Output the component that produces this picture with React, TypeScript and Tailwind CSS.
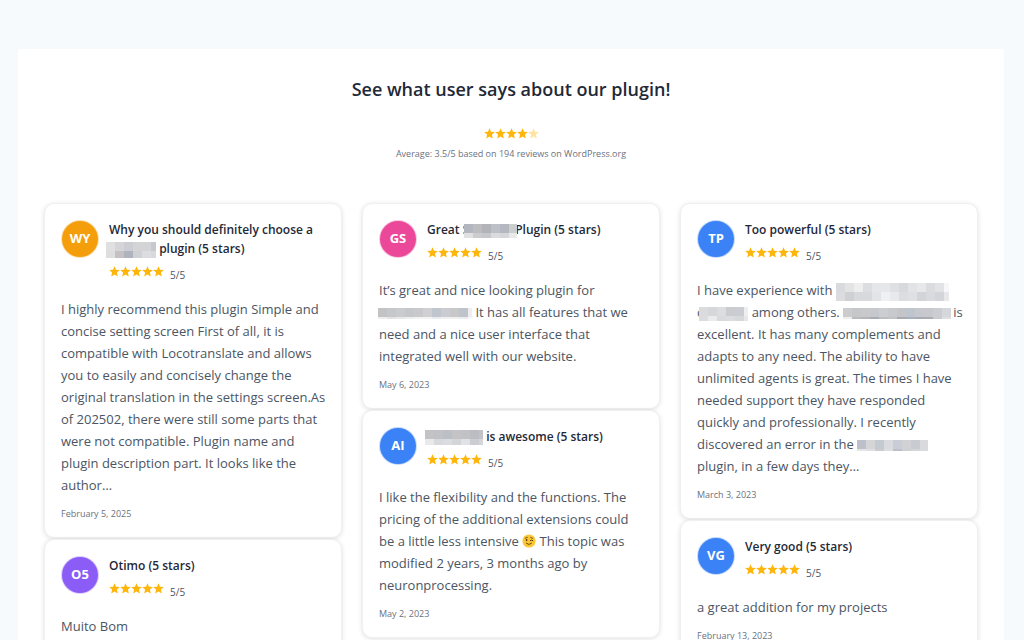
import type { ReactNode } from "react";

const STAR = "M5.5 0.2 7 3.8 10.9 4.1 7.9 6.6 8.8 10.4 5.5 8.4 2.2 10.4 3.1 6.6 0.1 4.1 4 3.8Z";

function Stars({ filled = 5 }: { filled?: number }) {
  return (
    <span className="flex" role="img" aria-label={`${filled} of 5 stars`}>
      {[1, 2, 3, 4, 5].map((n) => (
        <svg
          key={n}
          viewBox="0 0 11 11"
          className={n <= filled ? "size-[11px] fill-[#ffb60a]" : "size-[11px] fill-[#ffe3a1]"}
        >
          <path d={STAR} />
        </svg>
      ))}
    </span>
  );
}

// pixelated block over a redacted name, cells are 9px wide
function Mosaic({ width, rows, className }: { width: number; rows: [number, string[]][]; className?: string }) {
  const height = rows.reduce((sum, [h]) => sum + h, 0);
  let y = 0;
  return (
    <svg
      width={width}
      height={height}
      shapeRendering="crispEdges"
      className={`relative inline-block align-middle ${className ?? ""}`}
      aria-hidden="true"
    >
      {rows.map(([h, cells], r) => {
        const top = y;
        y += h;
        return cells.map((fill, i) => <rect key={`${r}-${i}`} x={i * 9} y={top} width={9} height={h} fill={fill} />);
      })}
    </svg>
  );
}

function Wink() {
  return (
    <svg viewBox="0 0 14 14" className="inline-block size-[14px] align-[-2px]" role="img" aria-label="wink">
      <circle cx="7" cy="7" r="6.6" fill="#fcc736" />
      <path d="M3.2 4.2 5.4 3.4M8.6 3.4 10.8 4.4" stroke="#6b4a12" strokeWidth="0.9" strokeLinecap="round" />
      <ellipse cx="4.6" cy="6.1" rx="0.9" ry="1.1" fill="#5b3c0c" />
      <path d="M8.3 6.5Q9.5 5.5 10.8 6.5" fill="none" stroke="#5b3c0c" strokeWidth="1" strokeLinecap="round" />
      <path d="M4.4 9.4Q7 11.8 9.6 9.3" fill="none" stroke="#6b4a12" strokeWidth="1" strokeLinecap="round" />
    </svg>
  );
}

type Review = {
  initials: string;
  color: string;
  title: ReactNode;
  body: ReactNode;
  date: string;
};

const columns: Review[][] = [
  [
    {
      initials: "WY",
      color: "bg-[#f59e0b]",
      title: (
        <>
          Why you should definitely choose a<br />
          <Mosaic
            width={50}
            className="-ml-[3px]"
            rows={[
              [9, ["#e0e0e1", "#d5d4d6", "#cbcdd3", "#d4d4d7", "#d3d4d6", "#c5c8cf"]],
              [7, ["#dedede", "#c5c0c3", "#aeb3bd", "#cfd1d5", "#dcdde1", "#d8d9dd"]],
            ]}
          />{" "}
          plugin (5 stars)
        </>
      ),
      body: (
        <>
          I highly recommend this plugin Simple and
          <br />
          concise setting screen First of all, it is
          <br />
          compatible with Locotranslate and allows
          <br />
          you to easily and concisely change the
          <br />
          original translation in the settings screen.As
          <br />
          of 202502, there were still some parts that
          <br />
          were not compatible. Plugin name and
          <br />
          plugin description part. It looks like the
          <br />
          author…
        </>
      ),
      date: "February 5, 2025",
    },
    { initials: "O5", color: "bg-[#8b5cf6]", title: "Otimo (5 stars)", body: "Muito Bom", date: "" },
  ],
  [
    {
      initials: "GS",
      color: "bg-[#ec4899]",
      title: (
        <>
          Great S
          <Mosaic
            width={53}
            className="-ml-[5px]"
            rows={[
              [9, ["#b3b6bf", "#bcbdc0", "#b1b3b8", "#bbc0c9", "#b4b8c1", "#cccdce"]],
              [5, ["#e0e0e1", "#cccccf", "#c7c8cd", "#d9dbdf", "#d5d6da", "#e9e9e9"]],
            ]}
          />
          <span className="-ml-[2px]">Plugin (5 stars)</span>
        </>
      ),
      body: (
        <>
          It’s great and nice looking plugin for
          <br />
          <Mosaic
            width={94}
            className="-ml-px"
            rows={[
              [9, ["#c2c3c5", "#c6c7ca", "#cacbce", "#c5c7cb", "#c9c9cb", "#d0d0d3", "#c0c6ce", "#cbccd1", "#c8c8cb", "#bfc3cb", "#eeeef0"]],
              [2, ["#eeeeee", "#e3e3e5", "#e8e8e9", "#eeeeef", "#f3f3f3", "#f3f3f4", "#eaebed", "#f0f0f1", "#f0f0f0", "#ededef", "#f7f7f7"]],
            ]}
          />{" "}
          It has all features that we
          <br />
          need and a nice user interface that
          <br />
          integrated well with our website.
        </>
      ),
      date: "May 6, 2023",
    },
    {
      initials: "AI",
      color: "bg-[#3b82f6]",
      title: (
        <>
          <Mosaic
            width={58}
            className="-ml-[2px]"
            rows={[
              [9, ["#c3c3c6", "#c1c2c5", "#bdbfc6", "#c4c4c7", "#c1c2c6", "#bbbdc3", "#c2c3c6"]],
              [6, ["#e9e9ea", "#d7d9dd", "#d9dde1", "#d4d5d9", "#e0e2e5", "#cccdd2", "#d5d6da"]],
            ]}
          />{" "}
          is awesome (5 stars)
        </>
      ),
      body: (
        <>
          I like the flexibility and the functions. The
          <br />
          pricing of the additional extensions could
          <br />
          be a little less intensive <Wink /> This topic was
          <br />
          modified 2 years, 3 months ago by
          <br />
          neuronprocessing.
        </>
      ),
      date: "May 2, 2023",
    },
  ],
  [
    {
      initials: "TP",
      color: "bg-[#3b82f6]",
      title: "Too powerful (5 stars)",
      body: (
        <>
          I have experience with{" "}
          <Mosaic
            width={113}
            rows={[
              [9, ["#d9dade", "#e2e3e5", "#eeeeef", "#dcdde1", "#e5e6e8", "#e6e7e9", "#dfe0e3", "#d8d9dd", "#e2e3e5", "#e8e8ea", "#dadce0", "#e3e3e5", "#f6f7f8"]],
              [9, ["#dcdce0", "#cfd0d2", "#d8d9dd", "#d8d9dc", "#e3e4e7", "#eef0f3", "#e8e9ed", "#dddde0", "#dfe0e3", "#d3d4d8", "#d9dadd", "#d3d5da", "#e8e8ea"]],
            ]}
          />
          <br />c
          <Mosaic
            width={49}
            className="-ml-1"
            rows={[
              [9, ["#dadbdd", "#d5d7da", "#dddde0", "#cbccd0", "#cccdd2", "#eeeeef"]],
              [5, ["#dbdce0", "#eaebed", "#d9dade", "#dadce0", "#d7d8da", "#e6e7e9"]],
            ]}
          />{" "}
          among others.{" "}
          <Mosaic
            width={108}
            rows={[
              [9, ["#cccccf", "#c5c7cb", "#c9c9cc", "#c6c8ce", "#cccdd0", "#c8c9cc", "#c4c5c9", "#bfc5cd", "#c7c8cd", "#c7c9ce", "#cccdd2", "#d5d7db"]],
              [2, ["#eeeeee", "#b7babf", "#b4b5b9", "#a8acb4", "#bdbdc1", "#c1c2c4", "#a9aaae", "#a7b0bd", "#a8acb5", "#abacb1", "#c9cbcf", "#dedfe2"]],
            ]}
          />
          <span className="ml-[2px]">is</span>
          <br />
          excellent. It has many complements and
          <br />
          adapts to any need. The ability to have
          <br />
          unlimited agents is great. The times I have
          <br />
          needed support they have responded
          <br />
          quickly and professionally. I recently
          <br />
          discovered an error in the{" "}
          <Mosaic
            width={71}
            rows={[
              [9, ["#bdc0ca", "#d5d5d8", "#c5c9d0", "#dadbde", "#cacdd6", "#d1d2d6", "#c8ccd1", "#d9dade"]],
              [2, ["#e5e6e9", "#dfdfe2", "#c9ccd2", "#dcdddf", "#bdbfc9", "#cfd0d3", "#d3d5d9", "#dadbdf"]],
            ]}
          />
          <br />
          plugin, in a few days they…
        </>
      ),
      date: "March 3, 2023",
    },
    {
      initials: "VG",
      color: "bg-[#3b82f6]",
      title: "Very good (5 stars)",
      body: "a great addition for my projects",
      date: "February 13, 2023",
    },
  ],
];

function ReviewCard({ review }: { review: Review }) {
  return (
    <article className="rounded-[10px] border border-[#f0f0f0] bg-white p-4 shadow-[0_1px_5px_rgba(0,0,0,0.12)]">
      <header className="flex gap-[10px]">
        <div
          className={`flex size-[38px] shrink-0 items-center justify-center rounded-full border border-white/70 text-[13px] font-bold text-white ${review.color}`}
        >
          {review.initials}
        </div>
        <div className="min-w-0 grow">
          <h3 className="text-[12px] leading-[19px] font-semibold whitespace-nowrap text-[#1f2937]">{review.title}</h3>
          <div className="mt-2 flex h-4 items-start gap-[6px]">
            <Stars />
            <span className="pt-[2px] text-[10px] leading-[14px] text-[#4b5563]">5/5</span>
          </div>
        </div>
      </header>
      <p className="mt-4 text-[13px] leading-[22px] whitespace-nowrap text-[#4b5563]">{review.body}</p>
      {review.date && (
        <time className="mt-[11px] block text-[9px] leading-[14px] text-[#6b7280]">{review.date}</time>
      )}
    </article>
  );
}

export default function App() {
  return (
    <main className="min-h-screen bg-[#f6fafd] pt-[49px] pr-5 pl-[18px] font-['Open_Sans','Noto_Sans',sans-serif]">
      <section className="rounded-t-[3px] bg-white px-[26px] pt-[27px] pb-6">
        <h2 className="text-center text-[18px] leading-[26px] font-semibold text-[#1f2937]">
          See what user says about our plugin!
        </h2>
        <div className="mt-[26px] flex justify-center">
          <Stars filled={4} />
        </div>
        <p className="mt-2 text-center text-[9px] leading-[14px] text-[#6b7280]">
          Average: 3.5/5 based on 194 reviews on WordPress.org
        </p>
        <div className="mt-[42px] grid grid-cols-3 items-start gap-5">
          {columns.map((reviews, i) => (
            <div key={i} className="flex flex-col gap-px">
              {reviews.map((r) => (
                <ReviewCard key={r.initials} review={r} />
              ))}
            </div>
          ))}
        </div>
      </section>
    </main>
  );
}
